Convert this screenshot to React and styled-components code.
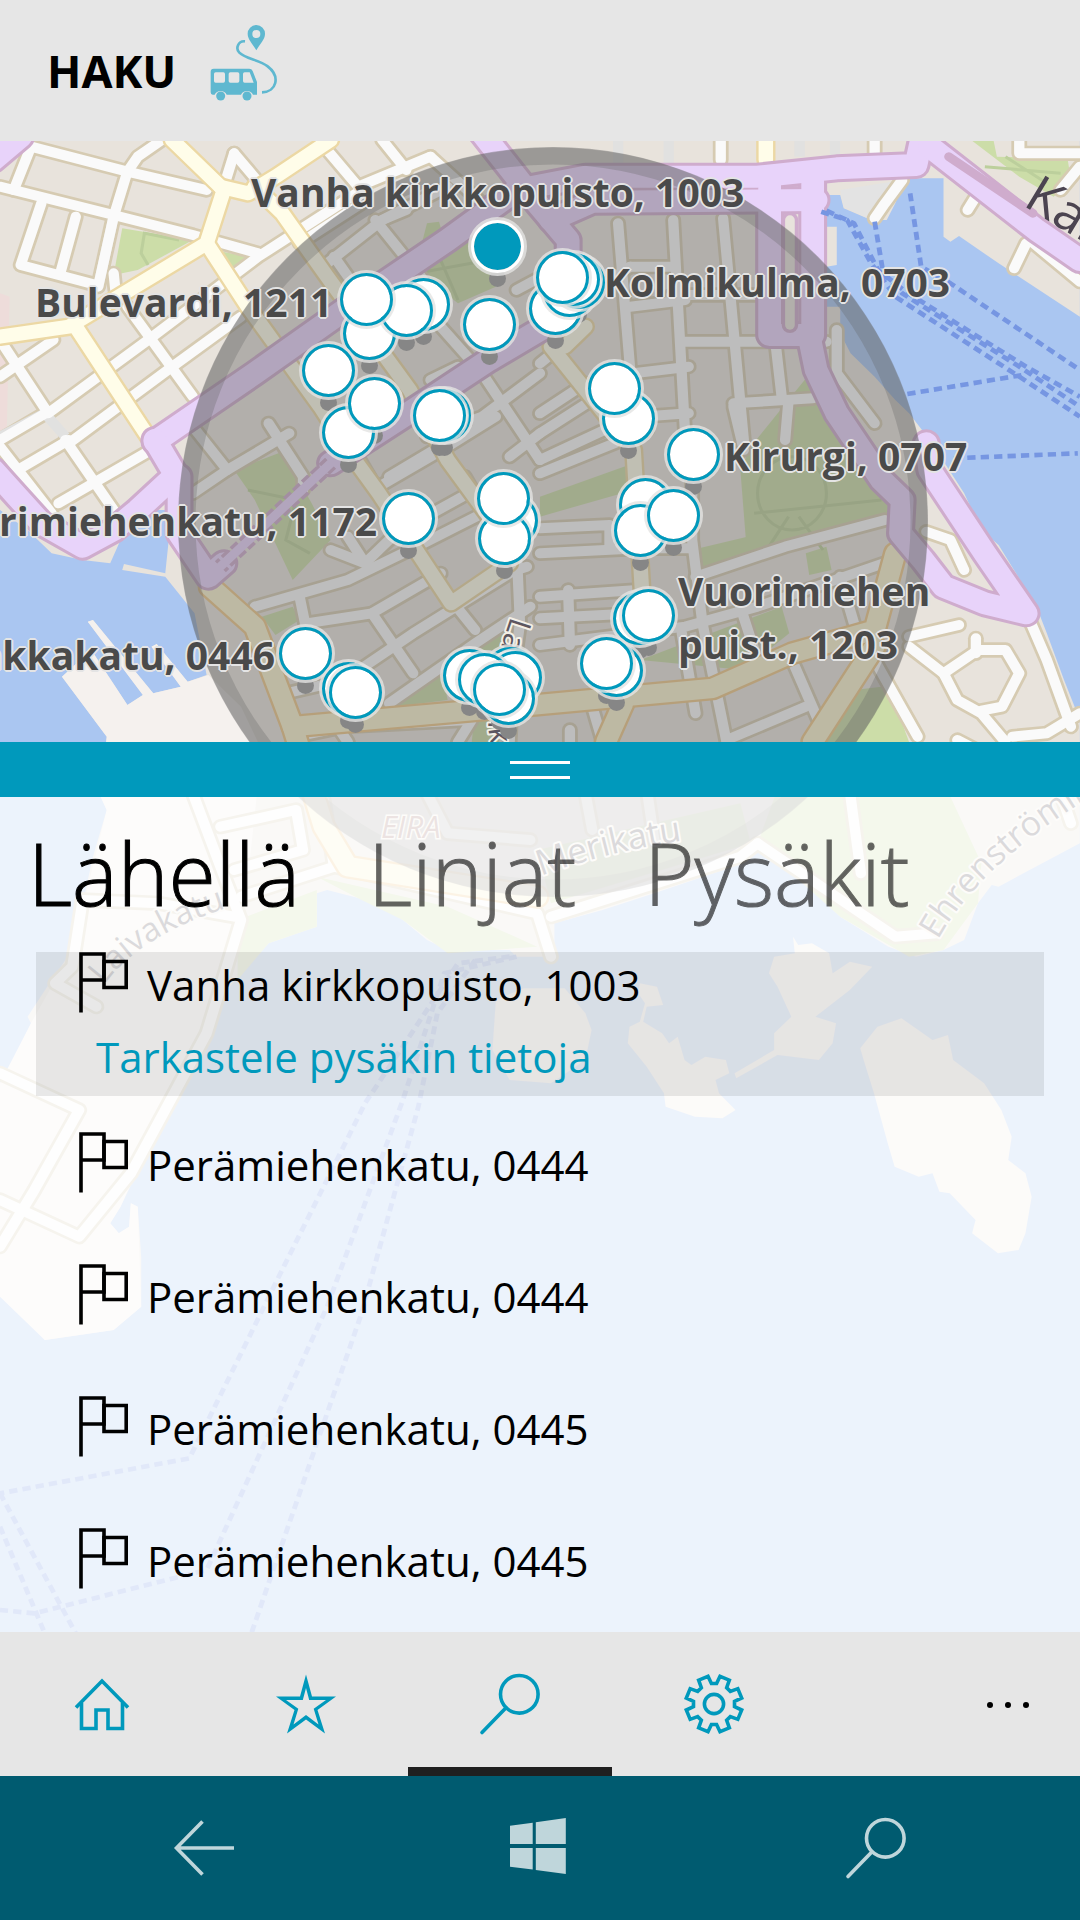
import React, { useState } from 'react';
import styled, { createGlobalStyle, css } from 'styled-components';

const accent = '#0099bc';
const fontStack = '"Open Sans", "Noto Sans", sans-serif';

const GlobalStyle = createGlobalStyle`
  *, *::before, *::after { box-sizing: border-box; }
  body { margin: 0; font-family: ${fontStack}; color: #000; }
  button { font: inherit; color: inherit; background: none; border: 0; padding: 0; cursor: pointer; }
`;

/* ---------- Page ---------- */

const Screen = styled.div`
  display: flex;
  flex-direction: column;
  height: 100vh;
  background: #e6e6e6;
  overflow: hidden;
`;

const Header = styled.header`
  display: flex;
  align-items: center;
  gap: 34px;
  height: 141px;
  flex: none;
  padding: 1px 0 0 47px;
  background: #e6e6e6;
`;

const Title = styled.h1`
  margin: 0;
  font-size: 45px;
  line-height: 60px;
  font-weight: 700;
`;

const Logo = styled.svg`
  width: 68px;
  height: 92px;
  padding-bottom: 16px;
`;

const Stage = styled.main`
  position: relative;
  display: flex;
  flex-direction: column;
  flex: 1;
  min-height: 0;
  overflow: hidden;
`;

/* ---------- Map ---------- */

const MapBackdrop = styled.svg`
  position: absolute;
  inset: 0;
  width: 100%;
  height: 100%;
  font-family: ${fontStack};
`;

const MapView = styled.section`
  position: relative;
  flex: 1;
  min-height: 0;
  overflow: hidden;
`;

const at = css`
  position: absolute;
  left: calc(50% + ${(p) => p.$x - 540}px);
  top: ${(p) => p.$y - 141}px;
`;

const PinFoot = styled.span`
  ${at}
  width: 17px;
  height: 17px;
  margin: 24px 0 0 -8px;
  border-radius: 50%;
  background: #868686;
`;

const Pin = styled.button`
  ${at}
  width: 53px;
  height: 53px;
  margin: -26px 0 0 -26px;
  border-radius: 50%;
  border: 3px solid ${(p) => (p.$selected ? '#fff' : accent)};
  background: ${(p) => (p.$selected ? accent : '#fff')};
  background-clip: padding-box;
  box-shadow: 0 0 0 3px rgba(228, 228, 226, 0.8);
`;

const PinLabel = styled.span`
  position: absolute;
  top: ${(p) => p.$y - 183}px;
  ${(p) => (p.$right
    ? `right: calc(50% + ${540 - p.$right}px);`
    : `left: calc(50% + ${p.$x - 540}px);`)}
  font-size: 39px;
  line-height: 53px;
  font-weight: 700;
  white-space: pre;
  color: #4a4a4a;
  text-shadow: 2px 0 0 #e4e4e4, -2px 0 0 #e4e4e4, 0 2px 0 #e4e4e4, 0 -2px 0 #e4e4e4,
    1px 1px 0 #e4e4e4, -1px -1px 0 #e4e4e4, 1px -1px 0 #e4e4e4, -1px 1px 0 #e4e4e4;
`;

/* ---------- Panel ---------- */

const Splitter = styled.button`
  position: relative;
  display: flex;
  flex-direction: column;
  align-items: center;
  justify-content: center;
  gap: 12px;
  flex: none;
  height: 55px;
  background: ${accent};
`;

const GripLine = styled.span`
  width: 60px;
  height: 3px;
  background: #fff;
`;

const Panel = styled.section`
  position: relative;
  flex: none;
  padding-bottom: 8px;
  background: rgba(255, 255, 255, 0.78);
`;

const Tabs = styled.div`
  display: flex;
  gap: 68px;
  padding: 17px 28px 21px;
`;

const Tab = styled.button`
  font-size: 86px;
  line-height: 117px;
  font-weight: 300;
  color: #000;
  -webkit-text-stroke: 1px #000;
  opacity: ${(p) => (p.$active ? 1 : 0.6)};
`;

const StopList = styled.ul`
  display: flex;
  flex-direction: column;
  gap: 36px;
  margin: 0;
  padding: 0 36px;
  list-style: none;
`;

const StopItem = styled.li`
  min-height: 96px;
  background: ${(p) => (p.$selected ? 'rgba(0, 0, 0, 0.085)' : 'transparent')};
`;

const StopButton = styled.button`
  display: flex;
  align-items: flex-start;
  gap: 19px;
  width: 100%;
  padding-left: 43px;
  font-size: 42px;
  line-height: 66px;
  text-align: left;
`;

const DetailsLink = styled.a`
  display: block;
  padding-left: 60px;
  font-size: 42px;
  line-height: 78px;
  color: ${accent};
  text-decoration: none;
`;

/* ---------- Bars ---------- */

const AppBar = styled.nav`
  display: flex;
  flex: none;
  height: 144px;
  background: #e6e6e6;
  color: ${accent};
`;

const BarButton = styled.button`
  display: flex;
  align-items: center;
  justify-content: center;
  flex: 0 1 204px;
  padding-top: 9px;
  border-bottom: 9px solid ${(p) => (p.$active ? '#1f1f1f' : 'transparent')};
`;

const MoreButton = styled(BarButton)`
  flex-basis: 144px;
  margin-left: auto;
  color: #000;
`;

const SystemBar = styled.nav`
  display: grid;
  grid-template-columns: repeat(3, 1fr);
  flex: none;
  height: 144px;
  padding: 0 36px;
  background: #005b70;
  color: #bfd6db;
`;

const SystemButton = styled.button`
  display: flex;
  align-items: center;
  justify-content: center;
`;

const Icon = styled.svg`
  width: 64px;
  height: 64px;
  fill: none;
  stroke: currentColor;
  stroke-width: 3.6;
`;

/* ---------- Icons ---------- */

const FlagIcon = () => (
  <svg width="49" height="61" viewBox="0 0 49 61" fill="none" stroke="#000" strokeWidth="3.6" aria-hidden="true">
    <path d="M2 60.500V2H25V28H2" />
    <path d="M25 9.500H47.200V35.500H25Z" />
  </svg>
);

const HomeIcon = () => (
  <Icon viewBox="0 0 64 64" aria-hidden="true">
    <path d="M6 35.500L32 9L58 35.500" />
    <path d="M11.500 31V56.500H26V38H38V56.500H52.500V31" />
  </Icon>
);

const StarIcon = () => (
  <Icon viewBox="0 0 64 64" aria-hidden="true">
    <path
      fill="currentColor"
      stroke="none"
      fillRule="evenodd"
      d="M32 2.500L38 24.500H62L43.500 38L51 61.500L32 47.500L13 61.500L20.500 38L2 24.500H26ZM32 16L28.800 28H12L24.300 36.700L19.500 52.500L32 43L44.500 52.500L39.700 36.700L52 28H35.200Z"
    />
  </Icon>
);

const SearchIcon = () => (
  <Icon viewBox="0 0 64 64" strokeLinecap="round" aria-hidden="true">
    <circle cx="41.300" cy="22.300" r="18.800" />
    <path d="M28 35.800L4 60.500" />
  </Icon>
);

const gearPoints = Array.from({ length: 8 }, (_, k) => {
  const a = (k * Math.PI) / 4;
  return [[-6, -27.700], [-2.600, -20.500], [2.600, -20.500], [6, -27.700]]
    .map(([x, y]) => `${(32 + x * Math.cos(a) - y * Math.sin(a)).toFixed(2)},${(32 + x * Math.sin(a) + y * Math.cos(a)).toFixed(2)}`)
    .join(' ');
}).join(' ');

const GearIcon = () => (
  <Icon viewBox="0 0 64 64" aria-hidden="true">
    <polygon points={gearPoints} />
    <circle cx="32" cy="32" r="9.600" />
  </Icon>
);

const MoreIcon = () => (
  <Icon viewBox="0 0 64 64" aria-hidden="true">
    {[14, 32, 50].map((x) => <circle key={x} cx={x} cy="33" r="3" fill="currentColor" stroke="none" />)}
  </Icon>
);

const BackIcon = () => (
  <Icon viewBox="0 0 64 64" aria-hidden="true">
    <path d="M62 32H5M30.500 5.500L4.500 32L30.500 58.500" />
  </Icon>
);

const WindowsIcon = () => (
  <Icon viewBox="0 0 64 64" aria-hidden="true">
    <path
      fill="currentColor"
      stroke="none"
      d="M2 9.700L24.700 6.700V28H2ZM27.800 6.200L57.800 2V28H27.800ZM2 32H24.700V53.500L2 50.700ZM27.800 32H57.800V58L27.800 54Z"
    />
  </Icon>
);

const BusLogo = () => (
  <Logo viewBox="630 75 204 228" fill="#5fb8d0" aria-hidden="true">
    <path fillRule="evenodd" d="M769 75A26 26 0 0 1 795 102C795 118 780 132 769 151C758 132 743 118 743 102A26 26 0 0 1 769 75ZM769 90A12 12 0 1 0 769 114A12 12 0 1 0 769 90Z" />
    <path d="M735 124C714 122 706 146 718 158C738 178 776 178 803 199C842 229 830 276 786 277" fill="none" stroke="#5fb8d0" strokeWidth="8" />
    <path fillRule="evenodd" d="M641 206H748Q755 206 758 213L771 246V284H759A20 20 0 0 0 723 284H680A20 20 0 0 0 644 284H638Q632 284 632 277V215Q632 206 641 206ZM647 217Q642 217 642 222V243Q642 248 647 248H670Q675 248 675 243V222Q675 217 670 217ZM691 217Q686 217 686 222V243Q686 248 691 248H713Q718 248 718 243V222Q718 217 713 217ZM734 217Q729 217 729 222V243Q729 248 734 248H761L749 217Z" />
    <circle cx="662" cy="288" r="13.500" />
    <circle cx="741" cy="288" r="13.500" />
  </Logo>
);

/* ---------- Map drawing ---------- */

const land = 'M0 0H3136V530L2900 370L2785 288L2760 305L2740 290V115H2630L2600 190L2575 240H2530L2450 205L2440 165H2375V260H2430V375L2400 380L2390 500H2440V580L2470 640L2540 710L2600 780L2640 820L2700 900L2800 1060L2850 1170L2900 1215L3010 1400L3040 1480L3090 1620L3136 1740V2110L2990 2190L2900 2240L2880 2235L2840 2290L2800 2400L2740 2430L2660 2450L2580 2420L2440 2330L2330 2220L2250 2160L2200 2130L2100 2190L1900 2260L1750 2310L1610 2350V2450H1500L1480 2430H1300L1240 2400L1170 2340L1100 2290L950 2250L920 2260V2360L780 2410L720 2480L650 2560L600 2680L540 2750L480 2900L420 3050L350 3200L320 3250L345 3280L375 3260L380 3190L400 3200L410 3350V3500L330 3570L130 3600L90 3540L50 3490L0 3470V2830L40 2760L90 2650L80 2630L150 2520L210 2430L270 2150L310 2010L290 1965L310 1790L180 1610L265 1530L370 1695L415 1665L255 1445L270 1440L445 1660L525 1640L440 1520L455 1512L545 1625L600 1605L565 1420L480 1310L355 1290L360 1272L480 1300L490 1200L480 1110H430L350 1200L320 1270L240 1260L150 1240L80 1170L0 1110Z';

const port = 'M180 1610L265 1530L370 1695L415 1665L255 1445L270 1440L445 1660L525 1640L440 1520L455 1512L545 1625L605 1605L700 1700L760 1830L700 2400L500 2850L350 3200L320 3250L345 3280L375 3260L380 3190L400 3200L410 3500L330 3570L130 3600L0 3470V2830L90 2650L210 2430L310 2010L290 1965L310 1790Z';

const islands = [
  'M2303 2390L2318 2415L2358 2410L2408 2440L2418 2500L2468 2465L2533 2480L2468 2550L2368 2630L2428 2650L2418 2710L2378 2760L2258 2745L2138 2815L2133 2800L2248 2730V2680L2298 2630L2258 2540L2233 2500L2248 2450L2308 2440Z',
  'M1858 2530L1908 2540L1926 2595L1878 2600L1868 2645L1923 2680L1943 2710L1968 2690L1988 2760L2008 2775L2048 2750L2108 2760L2118 2800L2078 2820L2088 2860L2136 2910L2098 2935L2018 2930L1933 2900L1928 2860L1878 2780L1823 2710L1828 2660L1858 2645L1873 2590L1853 2560Z',
  'M2498 2725L2548 2660L2618 2635L2708 2700L2753 2685L2768 2760L2858 2830L2908 2910L2938 2990L2928 3060L2978 3100L2996 3170L2978 3280L2958 3330L2898 3340L2823 3280L2833 3240L2758 3160L2728 3155L2708 3100L2668 3110L2598 3080L2578 3010L2538 2860L2508 2760Z',
  'M1440 2580L1520 2545H1640L1700 2620L1718 2670L1700 2760L1600 2830L1480 2820L1430 2730Z',
];

const greens = [
  'M355 265L560 300L400 390L330 405Z',
  'M620 330L720 350L662 402Z',
  'M1205 390L1240 250L1275 245L1290 300L1380 290L1440 440L1330 490Z',
  'M1640 130L2200 128V158H1640Z',
  'M1600 210L1700 190L1640 240Z',
  'M2820 0H2885L2895 50L3100 55L3110 120L3060 170L2960 110Z',
  'M680 990L820 935L905 1090L960 1200L850 1320L740 1080Z',
  'M760 1430L850 1400L870 1440L800 1485Z',
  'M1110 1705L1280 1580L1300 1680Z',
  'M1370 1530L1490 1415L1470 1530Z',
  'M1568 1070L1840 970V1050L1568 1130Z',
  'M2150 990L2180 920L2360 690L2500 880L2610 1090L2570 1150L2170 1250Z',
  'M2030 1225L2170 1190L2170 1250L2040 1300Z',
  'M2340 1240L2400 1220L2415 1290L2350 1305Z',
  'M1960 1520L2270 1400L2292 1480L2160 1590L1860 1560Z',
  'M2380 1806L2480 1650L2560 1640L2620 1750L2640 1806Z',
  'M690 2340L920 2250V2360L780 2410L690 2520Z',
  'M920 2210L1300 2300L1560 2420L1300 2440L1170 2340L1050 2280Z',
  'M1380 1700L1440 1680L1450 1806H1370Z',
  'M1560 2130L2150 1990L2180 2110L1600 2290Z',
  'M2250 1970H2760L2850 2170L2840 2290L2740 2430L2640 2450L2440 2330L2200 2110Z',
];

const streets = [
  'M0 140L330 225L560 285L750 340', 'M90 20L370 95L600 150', 'M90 20L40 150', 'M370 95L400 50L470 0',
  'M370 95L330 230L285 440', 'M120 190L60 375L280 435', 'M220 230L175 400', 'M680 40L650 140', 'M680 40L770 150',
  'M950 30L1040 140L1250 50', 'M1110 0L1180 90', 'M0 710L155 600', 'M0 600L140 820L430 600L750 350L1050 150',
  'M200 910L500 680L700 530', 'M370 500L560 770', 'M0 900L140 815', 'M330 400L335 450',
  'M60 985L200 900', 'M170 1090L430 935', 'M190 900L330 1110', 'M0 920L150 1120',
  'M1250 50L1400 190', 'M1090 240L1230 420', 'M1050 190L870 310', 'M560 1060L660 990L840 880', 'M560 860L660 990',
  'M780 850L880 1010V1050', 'M1010 900L1090 1040', 'M960 1230L1060 1270L1150 1180L1360 1060', 'M1060 1270L1010 1190',
  'M1100 1040L1300 920L1440 830', 'M740 1400L1010 1320L1230 1210L1440 1100', 'M870 1370L890 1470',
  'M890 1450L1080 1420L1280 1300', 'M1080 1420L1200 1600', 'M830 1660L1000 1620L1200 1480L1480 1300',
  'M1130 1690L1380 1510L1540 1400', 'M1310 1380L1380 1470', 'M1400 700L1568 960', 'M1568 700L1400 830L1240 890',
  'M1380 700L1500 620', 'M1350 1010L1400 1100', 'M860 1790L1000 1760L1360 1740',
  'M1500 1220L1510 1450L1490 1600L1480 1806', 'M950 370L1110 240L1300 140', 'M1110 240L1180 210', 'M860 660L1010 880', 'M970 350L1120 570', 'M1280 560L1400 700', 'M1250 720L1330 680', 'M1470 1300L1530 1280', 'M1480 950L1568 880', 'M1130 1010L1260 930', 'M980 1760L1010 1806', 'M1330 1806L1370 1740',
  'M1500 450L1590 400', 'M1650 1350L1655 1515', 'M1568 1435L1850 1420', 'M1980 1480L2020 1720', 'M2150 1400L2200 1560',
  'M1795 250L1830 690', 'M1955 240L1990 890', 'M2100 235L2160 900', 'M2250 590L2270 770', 'M1990 605H2400',
  'M1830 500L1990 480', 'M1830 380H1950', 'M1950 465H2230', 'M1568 670L1700 560', 'M1830 380L1568 560', 'M1568 880L1840 700L2000 680', 'M2130 790L2360 775', 'M2160 930L2130 800',
  'M1568 820L1700 730', 'M1860 830L2000 820', 'M1568 960L1880 810', 'M1568 1000L1880 870', 'M1568 1165L1770 1155V1220', 'M1568 1240L1860 1225H2010',
  'M1568 1370L1850 1350', 'M1568 1515L1990 1460L2200 1400L2580 1265', 'M2010 1020L2010 1200L2040 1450L2110 1806',
  'M2020 1310L2280 1220L2570 1140', 'M2440 1310L2480 1450', 'M2300 1560L2380 1750', 'M2110 1800L2340 1700',
  'M1720 1700L1750 1806', 'M1655 1806V1770', 'M2430 570V700L2540 850', 'M2290 780L2280 900',
  'M2640 1490L2785 1455', 'M2640 1520L2740 1600L2780 1680L2850 1720L2920 1806', 'M2740 1600L2840 1530H2920L2960 1600L2910 1700L2850 1712',
  'M2834 1495V1540', 'M2990 1440L3040 1560L3110 1760', 'M2940 1790L3040 1780L3136 1720', 'M2545 1570L2665 1790', 'M2690 1175L2760 1200L2800 1290',
  'M2960 0V40H3136', 'M3136 80L3080 150', 'M2990 300L3136 425', 'M2980 310L2945 385', 'M2840 160L2810 210', 'M2620 120L2570 190L2540 235',
  'M2093 0V60', 'M2540 0V50',
  'M560 1960L640 2180L700 2340L600 2680L380 3100L230 3290L0 3180', 'M640 2060L860 2010L880 2130L680 2190',
  'M240 2280L460 2290L680 2330', 'M240 2280L210 2480L160 2530L280 2600', 'M0 2800L230 2910L100 3150L0 3320',
  'M940 1980L970 2180L1560 2320L1600 2450', 'M970 2180L700 2270', 'M2470 1970L2500 2200', 'M2200 2110L2400 2250L2600 2390L2720 2380',
  'M1240 1960L1300 2080L1540 2100', 'M1700 1960L1720 2070', 'M1880 1960L1900 2100', 'M1600 2330L2150 2150L2200 2110', 'M2780 1800L3080 1960L3110 2050',
];

const yellowRoads = [
  'M500 0L650 150L600 310L200 560L0 590', 'M640 140L720 160L800 110L960 0', 'M600 310L720 500L930 800L1030 960L1100 1060L1310 1390L1480 1270',
  'M220 560L430 890', 'M740 140L820 220L950 410L1190 750L1300 960L1420 1130', 'M1600 620L1840 930L1870 1450', 'M2224 0V60', 'M1700 560L1640 620',
];

const orangeRoads = ['M610 1340L740 1460L850 1760L1500 1700L2070 1645L2300 1540L2540 1470L2600 1240', 'M2540 1520L2360 1806', 'M1810 1690L1760 1806', 'M850 1760L940 2060L1010 2180L1560 2270'];

const tramRoads = [
  'M1400 -20L1560 190L1650 300V420', 'M450 905L740 700L1000 510L1300 300L1500 150L1700 110H2200L2430 85L2660 75L2680 -20',
  'M2700 20L3010 270L3136 360', 'M1600 240L1720 185L2370 180', 'M2235 110V585H2360V110', 'M2350 590L2370 690L2430 820L2560 1020L2620 1080L2615 1180L2680 1260L2740 1340L2860 1390L2980 1420L2860 1240L2700 990L2690 910',
  'M1600 550L1420 660L1200 810L960 970', 'M450 900L510 1005L400 1110L330 1170L240 1220L120 1150L50 1070L-20 990', 'M520 1010V1180L605 1310L650 1270', 'M-20 60L60 -10',
];

const ferries = [
  'M2643 160L2675 380L2760 430L3136 690', 'M2540 245L2565 400L2620 460L2960 680L3136 800', 'M2385 215L2460 240L2530 370L2600 470L2960 710L3136 830',
  'M2400 212L2480 250L2550 390L2630 455L2980 680L3136 770', 'M2635 762L2970 705', 'M2770 955L3130 940',
  'M1480 2450L1330 2470L1060 2890L800 3430L550 3955L0 4060', 'M1500 2450L1290 2500L1170 2880L950 3500L600 4290L100 4420L0 4410',
  'M1380 2460L1270 2620L1215 2900L1050 3520L730 4480', 'M0 4060L220 4480', 'M0 4160L130 4480',
];

const Lines = ({ paths, color, width, ...rest }) => (
  <g fill="none" stroke={color} strokeWidth={width} strokeLinejoin="round" strokeLinecap="round" {...rest}>
    {paths.map((d) => <path key={d} d={d} />)}
  </g>
);

const StreetName = ({ id, d, size, children }) => (
  <g>
    <path id={id} d={d} fill="none" />
    <text fontSize={size} fill="#5c5660" stroke="#f3efe6" strokeWidth="4" paintOrder="stroke" strokeLinejoin="round">
      <textPath href={`#${id}`}>{children}</textPath>
    </text>
  </g>
);

const CityMap = () => (
  <MapBackdrop viewBox="0 1 1080 1491" preserveAspectRatio="xMidYMin slice" role="img" aria-label="Kartta">
    <rect width="1080" height="1500" fill="#aac6f1" />
    <g transform="scale(0.34435 0.33333)">
      <path d={land} fill="#e8e3dc" />
      <path d={port} fill="#f5f1ee" />
      {islands.map((d) => <path key={d} d={d} fill="#f0ebe4" />)}
      <path d="M0 460L28 470L20 860L0 920Z" fill="#eedcda" />
      {greens.map((d) => <path key={d} d={d} fill="#ccdda8" />)}
      <path d="M420 275L410 340L430 375M420 280L520 300M1250 290L1330 480M1210 400L1420 360M2200 1060A100 110 0 1 0 2400 1060A100 110 0 1 0 2200 1060M2190 1120L2560 1080M2290 1130L2220 1240M2320 1130L2390 1230M720 1050L860 1080L830 1200L900 1240M2860 80L3080 100M2920 50L3040 130" fill="none" stroke="#bccf9c" strokeWidth="9" />
      <path d="M2440 150L2620 120L2570 180L2530 240L2450 200Z" fill="#e3e3e3" />
      <Lines paths={streets} color="#d6cbb2" width={46} />
      <Lines paths={['M1795 0V70', 'M1942 0V70', 'M2322 0V50', 'M2425 0V50', 'M285 440L330 230', 'M0 890L130 820L190 890']} color="#e1e1e0" width={30} strokeLinecap="butt" />
      <Lines paths={streets} color="#fafafa" width={30} />
      <Lines paths={yellowRoads} color="#ecd8a4" width={56} />
      <Lines paths={orangeRoads} color="#efc98a" width={72} />
      <Lines paths={yellowRoads} color="#fffde9" width={42} />
      <Lines paths={orangeRoads} color="#fbf3cf" width={58} />
      <Lines paths={tramRoads} color="#cfaccd" width={84} />
      <Lines paths={tramRoads} color="#e8d3fa" width={66} />
      <Lines paths={['M960 970L640 1280']} color="#cfaccd" width={46} strokeDasharray="26 10" strokeLinecap="butt" />
      <Lines paths={['M960 970L640 1280']} color="#e8d3fa" width={26} />
      <Lines paths={['M2755 50L3000 220']} color="#cfaccd" width={26} />
      <Lines paths={['M2294 240V555']} color="#cfaccd" width={48} />
      <Lines paths={['M2294 240V555']} color="#e8e3dc" width={28} />
      <Lines paths={ferries} color="#7696e2" width={14} strokeDasharray="24 15" strokeLinecap="butt" />
    </g>
    <circle cx="553" cy="382" r="375" fill="rgba(97,97,97,0.4)" />
    <circle cx="553" cy="382" r="366" fill="none" stroke="rgba(97,97,97,0.28)" strokeWidth="17" />
    <StreetName id="laivurinkatu" d="M511 476Q482 560 490 600T507 690" size="31">Laivurinkatu</StreetName>
    <StreetName id="laivakatu" d="M104 845Q140 795 230 767" size="33">Laivakatu</StreetName>
    <StreetName id="merikatu" d="M541 736Q610 710 700 698" size="35">Merikatu</StreetName>
    <StreetName id="ehrenstromintie" d="M938 800Q985 715 1120 640" size="34">Ehrenströmintie</StreetName>
    <text x="381" y="698" fontSize="31" fontStyle="italic" fill="#a8827c" stroke="#f3efe6" strokeWidth="3" paintOrder="stroke">EIRA</text>
    <text transform="translate(1022 65) rotate(31)" fontSize="52" fill="#4b4450">Kan</text>
  </MapBackdrop>
);

/* ---------- Data ---------- */

const pins = [
  [369, 333], [423, 304], [406, 310], [366, 299], [328, 370], [348, 432], [374, 403], [444, 415], [439, 415],
  [489, 324], [555, 308], [569, 290], [578, 282], [573, 279], [562, 277], [628, 418], [614, 388], [693, 454],
  [645, 504], [640, 530], [673, 515], [639, 618], [648, 615], [616, 670], [606, 663], [408, 518], [511, 520],
  [504, 538], [503, 498], [305, 653], [348, 688], [355, 692], [469, 675], [510, 673], [515, 677], [484, 679],
  [508, 698], [499, 689], [497, 246, true],
];

const labels = [
  { text: 'Vanha kirkkopuisto, 1003', x: 251, y: 207 },
  { text: 'Bulevardi, 1211', x: 35, y: 317 },
  { text: 'Kolmikulma, 0703', x: 604, y: 297 },
  { text: 'Kirurgi, 0707', x: 724, y: 471 },
  { text: 'Vuorimiehen\npuist., 1203', x: 678, y: 606 },
  { text: 'Merimiehenkatu, 1172', right: 377, y: 536 },
  { text: 'Telakkakatu, 0446', right: 275, y: 670 },
];

const stops = [
  'Vanha kirkkopuisto, 1003', 'Perämiehenkatu, 0444', 'Perämiehenkatu, 0444', 'Perämiehenkatu, 0445', 'Perämiehenkatu, 0445',
];

const tabs = ['Lähellä', 'Linjat', 'Pysäkit'];

const sections = [
  ['Koti', HomeIcon], ['Suosikit', StarIcon], ['Haku', SearchIcon], ['Asetukset', GearIcon],
];

export default function App() {
  const [tab, setTab] = useState(0);
  const [selected, setSelected] = useState(0);

  return (
    <Screen>
      <GlobalStyle />
      <Header>
        <Title>HAKU</Title>
        <BusLogo />
      </Header>
      <Stage>
        <CityMap />
        <MapView>
          {pins.map(([x, y], i) => <PinFoot key={i} $x={x} $y={y} />)}
          {pins.map(([x, y, on], i) => <Pin key={i} $x={x} $y={y} $selected={on} aria-label="Pysäkki" />)}
          {labels.map((l) => <PinLabel key={l.text} $x={l.x} $y={l.y} $right={l.right}>{l.text}</PinLabel>)}
        </MapView>
        <Splitter aria-label="Muuta paneelin kokoa">
          <GripLine />
          <GripLine />
        </Splitter>
        <Panel>
          <Tabs role="tablist">
            {tabs.map((t, i) => (
              <Tab key={t} role="tab" aria-selected={i === tab} $active={i === tab} onClick={() => setTab(i)}>{t}</Tab>
            ))}
          </Tabs>
          <StopList>
            {stops.map((s, i) => (
              <StopItem key={i} $selected={i === selected}>
                <StopButton onClick={() => setSelected(i)}>
                  <FlagIcon />
                  {s}
                </StopButton>
                {i === selected && <DetailsLink href="#pysakki">Tarkastele pysäkin tietoja</DetailsLink>}
              </StopItem>
            ))}
          </StopList>
        </Panel>
      </Stage>
      <AppBar aria-label="Sovellus">
        {sections.map(([name, Glyph], i) => (
          <BarButton key={name} aria-label={name} $active={i === 2}><Glyph /></BarButton>
        ))}
        <MoreButton aria-label="Lisää"><MoreIcon /></MoreButton>
      </AppBar>
      <SystemBar aria-label="Järjestelmä">
        <SystemButton aria-label="Takaisin"><BackIcon /></SystemButton>
        <SystemButton aria-label="Aloitus"><WindowsIcon /></SystemButton>
        <SystemButton aria-label="Etsi"><SearchIcon /></SystemButton>
      </SystemBar>
    </Screen>
  );
}
